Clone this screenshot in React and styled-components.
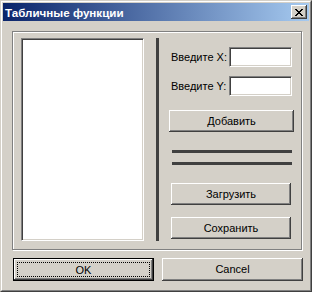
import React from "react";
import styled, { createGlobalStyle } from "styled-components";

const Global = createGlobalStyle`
  html, body { margin: 0; padding: 0; background: #d4d0c8; }
  body { font-family: "Liberation Sans", Arial, sans-serif; }
  * { box-sizing: border-box; }
`;

const Frame = styled.div`
  width: 312px;
  height: 292px;
  background: #d4d0c8;
  border-style: solid;
  border-width: 1px;
  border-color: #d4d0c8 #404040 #404040 #d4d0c8;
`;

const FrameInner = styled.div`
  height: 100%;
  border-style: solid;
  border-width: 1px;
  border-color: #ffffff #808080 #808080 #ffffff;
  padding: 1px;
  display: flex;
  flex-direction: column;
`;

const TitleBar = styled.div`
  height: 18px;
  display: flex;
  align-items: center;
  padding: 0 2px 0 2px;
  background: linear-gradient(to right, #0a246a, #a6caf0);
`;

const TitleText = styled.div`
  flex: 1;
  color: #fff;
  font-weight: bold;
  font-size: 11.6px;
  white-space: nowrap;
`;

const CloseBtn = styled.div`
  width: 16px;
  height: 14px;
  background: #d4d0c8;
  box-shadow: inset -1px -1px 0 #404040, inset 1px 1px 0 #ffffff,
    inset -2px -2px 0 #808080, inset 2px 2px 0 #d4d0c8;
  display: flex;
  align-items: center;
  justify-content: center;
`;

const Body = styled.div`
  flex: 1;
  display: flex;
  flex-direction: column;
  padding: 10px 0 0 9px;
`;

const Group = styled.div`
  width: 290px;
  height: 219px;
  border: 1px solid #808080;
  box-shadow: inset 1px 1px 0 #ffffff, 1px 1px 0 #ffffff;
  display: flex;
  padding: 6px 0 0 8px;
`;

const ListBox = styled.div`
  width: 123px;
  height: 203px;
  background: #fff;
  border-style: solid;
  border-width: 1px;
  border-color: #808080 #ffffff #ffffff #808080;
  box-shadow: inset 1px 1px 0 #404040, inset -1px -1px 0 #d4d0c8;
`;

const VDivider = styled.div`
  width: 3px;
  height: 203px;
  background: #404040;
  margin-left: 12px;
`;

const Panel = styled.div`
  width: 125px;
  margin-left: 10px;
  padding-top: 9px;
  display: flex;
  flex-direction: column;
`;

const FieldRow = styled.div`
  display: flex;
  align-items: center;
  justify-content: space-between;
  height: 20px;
  padding-left: 2px;
  margin-bottom: ${(p) => p.$mb || 0}px;
  font-size: 11px;
  color: #000;
`;

const Label = styled.span`
  white-space: nowrap;
`;

const Input = styled.div`
  flex-shrink: 0;
  width: 63px;
  height: 20px;
  margin-right: 2px;
  background: #fff;
  border-style: solid;
  border-width: 1px;
  border-color: #808080 #ffffff #ffffff #808080;
  box-shadow: inset 1px 1px 0 #404040, inset -1px -1px 0 #d4d0c8;
`;

const Button = styled.div`
  flex-shrink: 0;
  width: ${(p) => p.$w}px;
  height: ${(p) => p.$h || 22}px;
  margin-left: ${(p) => p.$ml || 0}px;
  margin-top: ${(p) => p.$mt || 0}px;
  background: #d4d0c8;
  box-shadow: inset -1px -1px 0 #404040, inset 1px 1px 0 #ffffff,
    inset -2px -2px 0 #808080, inset 2px 2px 0 #d4d0c8;
  display: flex;
  align-items: center;
  justify-content: center;
  font-size: 11px;
  color: #000;
  padding-bottom: 1px;
`;

const DefaultButton = styled.div`
  flex-shrink: 0;
  width: 141px;
  height: 23px;
  border: 1px solid #000;
  background: #d4d0c8;
  box-shadow: inset -1px -1px 0 #404040, inset 1px 1px 0 #ffffff,
    inset -2px -2px 0 #808080;
  padding: 3px;
  display: flex;
`;

const Focus = styled.div`
  flex: 1;
  border: 1px dotted #000;
  display: flex;
  align-items: center;
  justify-content: center;
  font-size: 11px;
  color: #000;
`;

const HLine = styled.div`
  width: 120px;
  height: 3px;
  background: #404040;
  margin-left: 3px;
  margin-top: ${(p) => p.$mt}px;
`;

const ButtonRow = styled.div`
  display: flex;
  gap: 8px;
  margin-top: 8px;
  padding-left: 1px;
`;

export default function App() {
  return (
    <>
      <Global />
      <Frame>
        <FrameInner>
          <TitleBar>
            <TitleText>Табличные функции</TitleText>
            <CloseBtn>
              <svg width="8" height="7" viewBox="0 0 8 7" shapeRendering="crispEdges">
                <path
                  d="M0 0h2v1h-2zM6 0h2v1h-2zM1 1h2v1h-2zM5 1h2v1h-2zM2 2h4v1h-4zM3 3h2v1h-2zM2 4h4v1h-4zM1 5h2v1h-2zM5 5h2v1h-2zM0 6h2v1h-2zM6 6h2v1h-2z"
                  fill="#000"
                />
              </svg>
            </CloseBtn>
          </TitleBar>
          <Body>
            <Group>
              <ListBox />
              <VDivider />
              <Panel>
                <FieldRow $mb={9}>
                  <Label>Введите X:</Label>
                  <Input />
                </FieldRow>
                <FieldRow>
                  <Label>Введите Y:</Label>
                  <Input />
                </FieldRow>
                <Button $w={125} $mt={14}>Добавить</Button>
                <HLine $mt={18} />
                <HLine $mt={9} />
                <Button $w={120} $ml={2} $mt={18}>Загрузить</Button>
                <Button $w={120} $ml={2} $mt={12}>Сохранить</Button>
              </Panel>
            </Group>
            <ButtonRow>
              <DefaultButton>
                <Focus>OK</Focus>
              </DefaultButton>
              <Button $w={141} $h={23}>Cancel</Button>
            </ButtonRow>
          </Body>
        </FrameInner>
      </Frame>
    </>
  );
}
